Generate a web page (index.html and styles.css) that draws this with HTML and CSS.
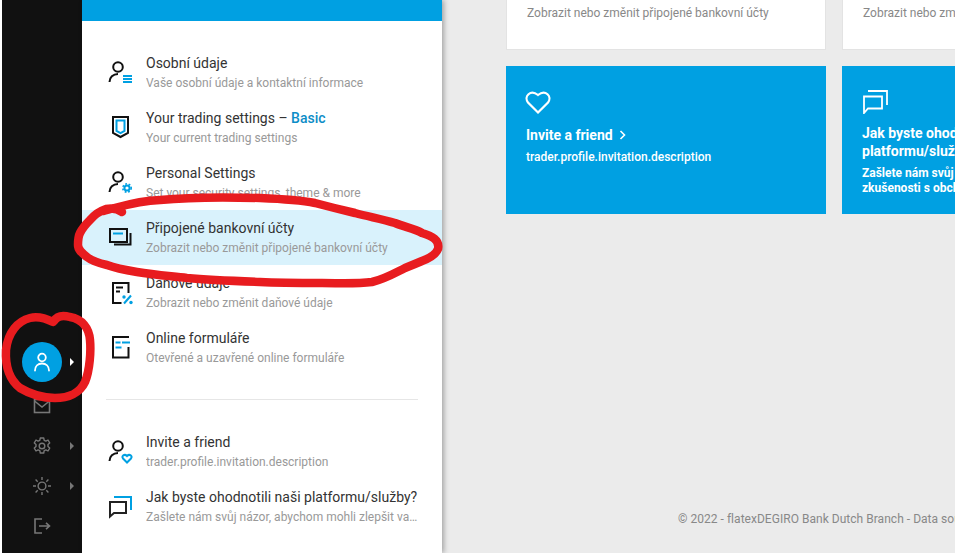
FILE: index.html
```html
<!DOCTYPE html>
<html lang="en">
<head>
    <meta charset="UTF-8">
    <title>Profile</title>
    <link rel="stylesheet" href="styles.css">
</head>
<body>
<div class="page">
    <nav class="sidebar">
        <div class="side-item side-avatar">
            <span class="avatar">
                <svg width="20" height="20" viewBox="0 0 20 20" fill="none" stroke="#fff" stroke-width="1.800" stroke-linecap="round">
                    <circle cx="10" cy="5.500" r="3.800"/>
                    <path d="M3 18.500c0-4.500 3-7 7-7s7 2.500 7 7"/>
                </svg>
            </span>
            <i class="caret caret-on"></i>
        </div>
        <div class="side-item">
            <svg class="side-icon" width="20" height="20" viewBox="0 0 20 20" fill="none" stroke="#777" stroke-width="1.600">
                <rect x="2.500" y="3.500" width="15" height="13"/>
                <path d="M2.500 5l7.500 6 7.500-6"/>
            </svg>
        </div>
        <div class="side-item">
            <svg class="side-icon" width="20" height="20" viewBox="0 0 20 20" fill="none" stroke="#777" stroke-width="1.400" stroke-linejoin="round">
                <path d="M8.300 2h3.400l.5 2.300 1.700.8 2.100-1.100 1.700 2.900-1.700 1.600v2l1.700 1.600-1.700 2.900-2.100-1.100-1.700.8-.5 2.300H8.300l-.5-2.300-1.700-.8-2.100 1.100-1.700-2.900 1.700-1.600v-2L2.300 6.900 4 4l2.100 1.100 1.700-.8z"/>
                <circle cx="10" cy="10" r="2.800"/>
            </svg>
            <i class="caret"></i>
        </div>
        <div class="side-item">
            <svg class="side-icon" width="20" height="20" viewBox="0 0 20 20" fill="none" stroke="#777" stroke-width="1.400">
                <circle cx="10" cy="10" r="3.900"/>
                <path d="M10 1v3M10 16v3M1 10h3M16 10h3M3.600 3.600l2.100 2.100M14.300 14.300l2.100 2.100M3.600 16.400l2.100-2.100M14.300 5.700l2.100-2.100"/>
            </svg>
            <i class="caret"></i>
        </div>
        <div class="side-item">
            <svg class="side-icon" width="20" height="20" viewBox="0 0 20 20" fill="none" stroke="#777" stroke-width="1.600">
                <path d="M10 3H3v14h7"/>
                <path d="M7 10h10.500M14 6.800l3.500 3.200-3.500 3.200"/>
            </svg>
        </div>
    </nav>

    <aside class="panel">
        <div class="panel-head"></div>
        <ul class="menu">
            <li class="menu-item">
                <svg class="menu-icon" width="28" height="28" viewBox="0 0 28 28" fill="none" stroke-width="2">
                    <circle cx="12" cy="8" r="4.800" stroke="#111"/>
                    <path d="M3.500 23c0-4.500 3.500-8 8.500-8" stroke="#111"/>
                    <path d="M17 17h9M17 20h9M17 23h9" stroke="#00a0e2"/>
                </svg>
                <div class="menu-text">
                    <div class="menu-title">Osobní údaje</div>
                    <div class="menu-sub">Vaše osobní údaje a kontaktní informace</div>
                </div>
            </li>
            <li class="menu-item">
                <svg class="menu-icon" width="28" height="28" viewBox="0 0 28 28" fill="none" stroke-width="2">
                    <path d="M7 3h15v16l-7.500 4L7 19z" stroke="#111"/>
                    <path d="M10.500 6.500h8v10.500l-4 2.200-4-2.200z" stroke="#00a0e2"/>
                </svg>
                <div class="menu-text">
                    <div class="menu-title">Your trading settings – <span class="level">Basic</span></div>
                    <div class="menu-sub">Your current trading settings</div>
                </div>
            </li>
            <li class="menu-item">
                <svg class="menu-icon" width="28" height="28" viewBox="0 0 28 28" fill="none" stroke-width="2">
                    <circle cx="12" cy="8" r="4.800" stroke="#111"/>
                    <path d="M3.500 23c0-4.500 3.500-8 8.500-8" stroke="#111"/>
                    <circle cx="21" cy="19" r="2.600" stroke="#00a0e2"/>
                    <circle cx="21" cy="19" r="4.200" stroke="#00a0e2" stroke-width="1.600" stroke-dasharray="1.800 1.700"/>
                </svg>
                <div class="menu-text">
                    <div class="menu-title">Personal Settings</div>
                    <div class="menu-sub">Set your security settings, theme &amp; more</div>
                </div>
            </li>
            <li class="menu-item active">
                <svg class="menu-icon" width="28" height="28" viewBox="0 0 28 28" fill="none" stroke-width="2">
                    <rect x="4" y="5" width="17" height="13" stroke="#111"/>
                    <path d="M24.500 9v11.500H8" stroke="#111"/>
                    <path d="M7 9.500h10" stroke="#00a0e2"/>
                </svg>
                <div class="menu-text">
                    <div class="menu-title">Připojené bankovní účty</div>
                    <div class="menu-sub">Zobrazit nebo změnit připojené bankovní účty</div>
                </div>
            </li>
            <li class="menu-item">
                <svg class="menu-icon" width="28" height="28" viewBox="0 0 28 28" fill="none" stroke-width="2">
                    <path d="M22.500 14V4H7v20h8.500M10 8.500h7M10 12.500h4" stroke="#111"/>
                    <path d="M18 24.500l7-8" stroke="#00a0e2"/>
                    <circle cx="18" cy="18" r="1.700" fill="#00a0e2"/>
                    <circle cx="25" cy="23.500" r="1.700" fill="#00a0e2"/>
                </svg>
                <div class="menu-text">
                    <div class="menu-title">Daňové údaje</div>
                    <div class="menu-sub">Zobrazit nebo změnit daňové údaje</div>
                </div>
            </li>
            <li class="menu-item">
                <svg class="menu-icon" width="28" height="28" viewBox="0 0 28 28" fill="none" stroke-width="2">
                    <path d="M23 3H7v20.500h15.500V13" stroke="#111"/>
                    <path d="M9.500 8.500h5M16 8.500h8M9.500 13.500h6" stroke="#00a0e2"/>
                </svg>
                <div class="menu-text">
                    <div class="menu-title">Online formuláře</div>
                    <div class="menu-sub">Otevřené a uzavřené online formuláře</div>
                </div>
            </li>
        </ul>
        <div class="menu-line"></div>
        <ul class="menu">
            <li class="menu-item">
                <svg class="menu-icon" width="28" height="28" viewBox="0 0 28 28" fill="none" stroke-width="2">
                    <circle cx="12" cy="8" r="4.800" stroke="#111"/>
                    <path d="M3.500 23c0-4.500 3.500-8 8.500-8" stroke="#111"/>
                    <path d="M21 24.500l-4-4c-2-2.500 1.500-5 4-2.500 2.500-2.500 6-0 4 2.500z" stroke="#00a0e2"/>
                </svg>
                <div class="menu-text">
                    <div class="menu-title">Invite a friend</div>
                    <div class="menu-sub">trader.profile.invitation.description</div>
                </div>
            </li>
            <li class="menu-item">
                <svg class="menu-icon" width="28" height="28" viewBox="0 0 28 28" fill="none" stroke-width="2">
                    <path d="M8 4h17v13" stroke="#00a0e2"/>
                    <path d="M4 9h16v11H8l-4 3.500z" stroke="#222"/>
                </svg>
                <div class="menu-text">
                    <div class="menu-title">Jak byste ohodnotili naši platformu/služby?</div>
                    <div class="menu-sub">Zašlete nám svůj názor, abychom mohli zlepšit vaše zkušenosti</div>
                </div>
            </li>
        </ul>
    </aside>

    <main class="content">
        <div class="cards">
            <div class="card card-white">Zobrazit nebo změnit připojené bankovní účty</div>
            <div class="card card-white">Zobrazit nebo změnit připojené bankovní účty</div>
        </div>
        <div class="cards">
            <div class="card card-blue">
                <svg class="card-icon heart" width="28" height="26" viewBox="0 0 28 26" fill="none" stroke="#fff" stroke-width="2.200">
                    <path d="M14 24.500L4 14.500C-.5 8.500 6.500 1 14 7 21.500 1 28.500 8.500 24 14.500z"/>
                </svg>
                <div class="card-title">Invite a friend
                    <svg class="chevron" width="8" height="10" viewBox="0 0 8 10" fill="none" stroke="#fff" stroke-width="1.600"><path d="M1.500 1l4 4-4 4"/></svg>
                </div>
                <div class="card-desc">trader.profile.invitation.description</div>
            </div>
            <div class="card card-blue">
                <svg class="card-icon" width="28" height="26" viewBox="0 0 28 26" fill="none" stroke="#fff" stroke-width="1.800">
                    <path d="M6 3h19v14"/>
                    <path d="M2 8.500h18v12H6l-4 4.500z"/>
                </svg>
                <div class="card-title card-title-long">Jak byste ohodnotili naši<br>platformu/služby?</div>
                <div class="card-desc card-desc-long">Zašlete nám svůj názor, abychom mohli zlepšit vaše<br>zkušenosti s obchodováním</div>
            </div>
        </div>
        <footer class="footer">© 2022 - flatexDEGIRO Bank Dutch Branch - Data source and disclaimers</footer>
    </main>

    <!-- red marker drawn on top of the screenshot -->
    <svg class="marker" width="955" height="553" viewBox="0 0 955 553" fill="none" stroke="#e81c1f" stroke-width="8.500" stroke-linecap="round" stroke-linejoin="round">
        <path d="M103 211C120 207 135 201 160 200C190 197 225 197 260 198C285 199 300 200 315 203C330 207 342 210 355 213C370 217 382 219 395 223C405 227 415 229 422 233C432 236 440 240 438 249C436 254 430 258 422 261C415 264 410 266 405 268C395 273 385 279 372 282C355 284 340 283 322 283C300 283 280 283 260 282C235 281 210 280 187 278C170 276 155 275 137 272C125 270 115 268 107 265C98 263 92 261 87 257C82 253 78 250 78 245C78 240 78 237 80 233C83 227 87 223 90 220C95 214 100 211 106 209C112 208 118 209 122 212"/>
        <path d="M53 322C45 318 38 316 30 318C18 321 8 332 6 350C5 368 10 380 20 388C30 394 42 398 55 398C68 398 80 393 85 382C90 370 91 350 90 340C89 328 82 319 70 317C63 315 57 316 54 321"/>
    </svg>
</div>
</body>
</html>
```
FILE: styles.css
```css
*{
    margin: 0;
    padding: 0;
    box-sizing: border-box;
}

html,body{
    height: 100%;
    overflow: hidden;
}

body{
    font-family: Roboto, "Liberation Sans", sans-serif;
    background-color: #fff;
}

.page{
    position: relative;
    display: flex;
    height: 553px;
    padding-left: 2px;
    background-color: #ebebeb;
    box-shadow: inset 2px 0 0 #fff;
    overflow: hidden;
}

/* left black bar */
.sidebar{
    width: 80px;
    flex: none;
    display: flex;
    flex-direction: column;
    justify-content: flex-end;
    padding-bottom: 7px;
    background-color: #111;
}
.side-item{
    position: relative;
    height: 40px;
    display: flex;
    align-items: center;
    justify-content: center;
}
.side-avatar{
    height: 48px;
}
.avatar{
    width: 40px;
    height: 40px;
    border-radius: 50%;
    background-color: #00a0e2;
    display: flex;
    align-items: center;
    justify-content: center;
}
.caret{
    position: absolute;
    left: 68px;
    top: 50%;
    margin-top: -4px;
    border-left: 4px solid #777;
    border-top: 4px solid transparent;
    border-bottom: 4px solid transparent;
}
.caret-on{
    border-left-color: #fff;
}

/* white menu panel */
.panel{
    width: 360px;
    flex: none;
    background-color: #fff;
    box-shadow: 2px 0 5px rgba(0,0,0,.3);
    z-index: 1;
}
.panel-head{
    height: 21px;
    margin-bottom: 24px;
    background-color: #00a0e2;
}
.menu{
    list-style: none;
}
.menu-item{
    display: flex;
    height: 55px;
    padding: 8px 24px 0;
    gap: 12px;
}
.menu-item.active{
    background-color: #d9f2fc;
}
.menu-icon{
    flex: none;
    margin-top: 6px;
}
.menu-text{
    min-width: 0;
    flex: 1;
}
.menu-title{
    font-size: 14px;
    line-height: 20px;
    color: #333;
    white-space: nowrap;
}
.menu-sub{
    font-size: 12px;
    line-height: 20px;
    color: #999;
    white-space: nowrap;
    overflow: hidden;
    text-overflow: ellipsis;
}
.level{
    font-weight: 500;
    color: #0d8dc7;
}
.menu-line{
    height: 1px;
    margin: 24px 24px;
    background-color: #e6e6e6;
}

/* right side */
.content{
    flex: 1;
    min-width: 0;
    display: flex;
    flex-direction: column;
    gap: 16px;
    padding-left: 64px;
}
.cards{
    display: flex;
    gap: 16px;
}
.card{
    width: 320px;
    flex: none;
}
.card-white{
    height: 50px;
    padding: 5px 20px 0;
    font-size: 12px;
    line-height: 16px;
    color: #888;
    white-space: nowrap;
    background-color: #fff;
    border: 1px solid #e3e3e3;
    border-top: 0;
}
.card-blue{
    height: 148px;
    padding: 22px 20px 0;
    color: #fff;
    background-color: #00a0e2;
}
.card-icon{
    display: block;
    margin-bottom: 12px;
}
.heart{
    margin-left: -2px;
}
.card-title{
    font-size: 14px;
    line-height: 18px;
    font-weight: 700;
}
.card-title-long{
    margin-top: -2px;
}
.chevron{
    margin-left: 3px;
}
.card-desc{
    margin-top: 5px;
    font-size: 12px;
    line-height: 16px;
    font-weight: 500;
}
.card-desc-long{
    margin-top: 6px;
    line-height: 15px;
    font-weight: 700;
}
.footer{
    margin-top: auto;
    padding: 0 0 26px 172px;
    font-size: 12px;
    line-height: 16px;
    letter-spacing: .03px;
    color: #888;
    white-space: nowrap;
}

/* the red pen strokes lie over everything */
.marker{
    position: absolute;
    left: 0;
    top: 0;
    z-index: 2;
    pointer-events: none;
}
```
